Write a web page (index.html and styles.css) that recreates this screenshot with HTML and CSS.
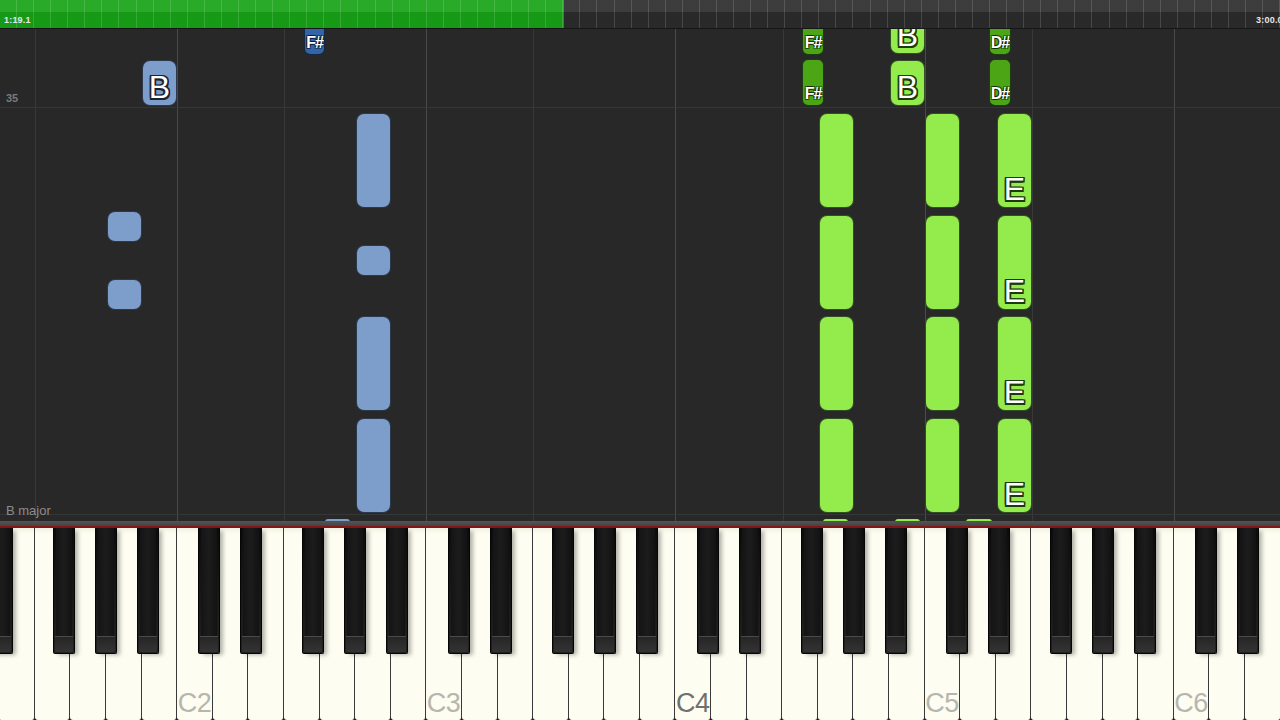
FILE: index.html
```html
<!DOCTYPE html>
<html>
<head>
<meta charset="utf-8">
<link rel="stylesheet" href="styles.css">
</head>
<body>
<div class="app">
  <div class="topbar">
    <span class="time">1:19.1</span>
    <span class="time end">3:00.05</span>
  </div>

  <div class="roll">
    <span class="measure-num">35</span>
    <span class="key-name">B major</span>

    <!-- left hand (blue) -->
    <div class="note lb" style="left:142px;top:31px;width:35px;height:46px"><span class="lbl big blue-o">B</span></div>
    <div class="note db sharp" style="left:304px;top:-12px;width:21px;height:38px"><span class="lbl small blue-o">F#</span></div>
    <div class="note lb" style="left:356px;top:84px;width:35px;height:95px"></div>
    <div class="note lb" style="left:356px;top:216px;width:35px;height:31px"></div>
    <div class="note lb" style="left:356px;top:287px;width:35px;height:95px"></div>
    <div class="note lb" style="left:356px;top:389px;width:35px;height:95px"></div>
    <div class="note lb" style="left:107px;top:182px;width:35px;height:31px"></div>
    <div class="note lb" style="left:107px;top:250px;width:35px;height:31px"></div>
    <div class="sliver lb" style="left:325px;width:25px"></div>

    <!-- right hand (green) -->
    <div class="note dg sharp" style="left:802px;top:-12px;width:22px;height:38px"><span class="lbl small green-o">F#</span></div>
    <div class="note dg sharp" style="left:802px;top:30px;width:22px;height:47px"><span class="lbl small green-o">F#</span></div>
    <div class="note lg" style="left:890px;top:-20px;width:35px;height:45px"><span class="lbl big green-o">B</span></div>
    <div class="note lg" style="left:890px;top:31px;width:35px;height:46px"><span class="lbl big green-o">B</span></div>
    <div class="note dg sharp" style="left:989px;top:-12px;width:22px;height:38px"><span class="lbl small green-o">D#</span></div>
    <div class="note dg sharp" style="left:989px;top:30px;width:22px;height:47px"><span class="lbl small green-o">D#</span></div>

    <div class="note lg" style="left:819px;top:84px;width:35px;height:95px"></div>
    <div class="note lg" style="left:819px;top:186px;width:35px;height:95px"></div>
    <div class="note lg" style="left:819px;top:287px;width:35px;height:95px"></div>
    <div class="note lg" style="left:819px;top:389px;width:35px;height:95px"></div>

    <div class="note lg" style="left:925px;top:84px;width:35px;height:95px"></div>
    <div class="note lg" style="left:925px;top:186px;width:35px;height:95px"></div>
    <div class="note lg" style="left:925px;top:287px;width:35px;height:95px"></div>
    <div class="note lg" style="left:925px;top:389px;width:35px;height:95px"></div>

    <div class="note lg" style="left:997px;top:84px;width:35px;height:95px"><span class="lbl big green-o">E</span></div>
    <div class="note lg" style="left:997px;top:186px;width:35px;height:95px"><span class="lbl big green-o">E</span></div>
    <div class="note lg" style="left:997px;top:287px;width:35px;height:95px"><span class="lbl big green-o">E</span></div>
    <div class="note lg" style="left:997px;top:389px;width:35px;height:95px"><span class="lbl big green-o">E</span></div>

    <div class="sliver lg" style="left:823px;width:25px"></div>
    <div class="sliver lg" style="left:895px;width:25px"></div>
    <div class="sliver lg" style="left:966px;width:26px"></div>
  </div>

  <div class="keyboard">
    <div class="kb-band"></div>
    <div class="kb-red"></div>
    <div class="keys">
      <div class="wk"></div><div class="wk"></div><div class="wk"></div><div class="wk"></div><div class="wk"></div>
      <div class="wk"><span class="cname">C2</span></div><div class="wk"></div><div class="wk"></div><div class="wk"></div><div class="wk"></div><div class="wk"></div><div class="wk"></div>
      <div class="wk"><span class="cname">C3</span></div><div class="wk"></div><div class="wk"></div><div class="wk"></div><div class="wk"></div><div class="wk"></div><div class="wk"></div>
      <div class="wk"><span class="cname mid">C4</span></div><div class="wk"></div><div class="wk"></div><div class="wk"></div><div class="wk"></div><div class="wk"></div><div class="wk"></div>
      <div class="wk"><span class="cname">C5</span></div><div class="wk"></div><div class="wk"></div><div class="wk"></div><div class="wk"></div><div class="wk"></div><div class="wk"></div>
      <div class="wk"><span class="cname">C6</span></div><div class="wk"></div><div class="wk"></div>

      <div class="bk" style="left:-8px"></div>
      <div class="bk" style="left:54px"></div>
      <div class="bk" style="left:96px"></div>
      <div class="bk" style="left:138px"></div>

      <div class="bk" style="left:199.2px"></div>
      <div class="bk" style="left:241.2px"></div>
      <div class="bk" style="left:303.2px"></div>
      <div class="bk" style="left:345.2px"></div>
      <div class="bk" style="left:387.2px"></div>

      <div class="bk" style="left:448.4px"></div>
      <div class="bk" style="left:490.4px"></div>
      <div class="bk" style="left:552.4px"></div>
      <div class="bk" style="left:594.4px"></div>
      <div class="bk" style="left:636.4px"></div>

      <div class="bk" style="left:697.6px"></div>
      <div class="bk" style="left:739.6px"></div>
      <div class="bk" style="left:801.6px"></div>
      <div class="bk" style="left:843.6px"></div>
      <div class="bk" style="left:885.6px"></div>

      <div class="bk" style="left:946.8px"></div>
      <div class="bk" style="left:988.8px"></div>
      <div class="bk" style="left:1050.8px"></div>
      <div class="bk" style="left:1092.8px"></div>
      <div class="bk" style="left:1134.8px"></div>

      <div class="bk" style="left:1196px"></div>
      <div class="bk" style="left:1238px"></div>
    </div>
  </div>
</div>
</body>
</html>
```

FILE: styles.css
```css
* { box-sizing: border-box; }

html, body {
  margin: 0;
  padding: 0;
  width: 1280px;
  height: 720px;
  overflow: hidden;
  background: #282828;
  font-family: "Liberation Sans", Arial, sans-serif;
}

.app {
  width: 1280px;
  height: 720px;
  display: flex;
  flex-direction: column;
}

/* ---------- progress bar ---------- */
.topbar {
  flex: none;
  height: 29px;
  display: flex;
  justify-content: space-between;
  align-items: flex-end;
  padding: 0 0 3px 4px;
  border-bottom: 1px solid #161616;
  background:
    repeating-linear-gradient(to right, transparent 0 16.07px, rgba(255,255,255,0.14) 16.07px 17.07px),
    linear-gradient(to bottom, rgba(255,255,255,0.08) 0 12px, rgba(0,0,0,0.06) 12px 100%),
    linear-gradient(to right, #17a417 0 564px, #2c2c2c 564px 100%);
}

.time {
  font-size: 9px;
  font-weight: bold;
  color: #e6e6e6;
  line-height: 10px;
  letter-spacing: 0.2px;
  white-space: nowrap;
}

.time.end {
  margin-right: -8px;
}

/* ---------- note roll ---------- */
.roll {
  flex: none;
  position: relative;
  height: 492px;
  overflow: hidden;
  background-color: #282828;
  background-image:
    linear-gradient(to bottom, transparent 78px, #363636 78px 79px, transparent 79px),
    linear-gradient(to bottom, transparent 485px, #363636 485px 486px, transparent 486px),
    repeating-linear-gradient(to right, #4a4a4a 0 1px, transparent 1px 249.2px),
    repeating-linear-gradient(to right, #383838 0 1px, transparent 1px 249.2px);
  background-position: 0 0, 0 0, 177px 0, 35px 0;
  background-size: 100% 100%, 100% 100%, 1280px 100%, 1280px 100%;
  background-repeat: no-repeat;
}

.measure-num {
  position: absolute;
  left: 6px;
  top: 63px;
  font-size: 11px;
  font-weight: bold;
  color: #7a7a7a;
}

.key-name {
  position: absolute;
  left: 6px;
  top: 474px;
  font-size: 13px;
  color: #8c8c8c;
}

.note {
  position: absolute;
  border-radius: 8px;
  border: 1px solid rgba(10, 14, 20, 0.7);
  display: flex;
  flex-direction: column;
  justify-content: flex-end;
  align-items: center;
  overflow: hidden;
}

.note.sharp {
  border-radius: 6px;
}

.lb { background: #7d9dca; }
.db { background: #3363a8; }
.lg { background: #94eb4c; }
.dg { background: #4ca515; }

.lbl {
  color: #ffffff;
  line-height: 1;
  text-align: center;
  white-space: nowrap;
}

.lbl.big {
  font-size: 32px;
  padding-bottom: 2px;
}

.lbl.small {
  font-size: 16px;
  font-weight: bold;
  padding-bottom: 3px;
  letter-spacing: -1px;
}

.blue-o {
  text-shadow:
    -1.5px -1.5px 0 #1b2333, 1.5px -1.5px 0 #1b2333,
    -1.5px 1.5px 0 #1b2333, 1.5px 1.5px 0 #1b2333,
    0 -1.5px 0 #1b2333, 0 1.5px 0 #1b2333,
    -1.5px 0 0 #1b2333, 1.5px 0 0 #1b2333;
}

.green-o {
  text-shadow:
    -1.5px -1.5px 0 #1d3a0d, 1.5px -1.5px 0 #1d3a0d,
    -1.5px 1.5px 0 #1d3a0d, 1.5px 1.5px 0 #1d3a0d,
    0 -1.5px 0 #1d3a0d, 0 1.5px 0 #1d3a0d,
    -1.5px 0 0 #1d3a0d, 1.5px 0 0 #1d3a0d;
}

.lbl.small.blue-o, .lbl.small.green-o {
  text-shadow:
    -1px -1px 0 rgba(0,0,0,0.5), 1px -1px 0 rgba(0,0,0,0.5),
    -1px 1px 0 rgba(0,0,0,0.5), 1px 1px 0 rgba(0,0,0,0.5);
}

.sliver {
  position: absolute;
  top: 490px;
  height: 3px;
  border-radius: 3px 3px 0 0;
}

/* ---------- keyboard ---------- */
.keyboard {
  flex: none;
  height: 199px;
  display: flex;
  flex-direction: column;
  background: #1a1a1a;
}

.kb-band {
  flex: none;
  height: 5px;
  background: linear-gradient(to bottom, #545454, #444444);
}

.kb-red {
  flex: none;
  height: 2px;
  background: #861616;
}

.keys {
  flex: 1;
  position: relative;
  display: flex;
  margin-left: -0.8px;
}

.wk {
  flex: none;
  width: 35.6px;
  height: 100%;
  background: linear-gradient(to bottom, #f1f1e4 0, #fdfdf1 6px, #fdfdf1 100%);
  border-right: 1px solid #3a3a3a;
  border-radius: 0 0 3px 3px;
  display: flex;
  justify-content: center;
  align-items: flex-end;
  padding-bottom: 3px;
}

.cname {
  font-size: 27px;
  line-height: 27px;
  color: #b6b6ae;
  letter-spacing: -0.5px;
}

.cname.mid {
  color: #707070;
}

.bk {
  position: absolute;
  top: 0;
  width: 22px;
  height: 126px;
  background: linear-gradient(to bottom, #0c0c0c 0, #151515 40%, #1e1e1e 85%, #222 100%);
  border: 1px solid #050505;
  border-top: none;
  border-radius: 0 0 2px 2px;
  box-shadow: 4px 2px 4px -1px rgba(0,0,0,0.3);
}

.bk::before {
  content: "";
  position: absolute;
  left: 2px;
  right: 2px;
  top: 0;
  bottom: 17px;
  background: linear-gradient(to right, #141414, #1c1c1c 50%, #121212);
}

.bk::after {
  content: "";
  position: absolute;
  left: 1px;
  right: 1px;
  bottom: 1px;
  height: 16px;
  background: linear-gradient(to bottom, #4a4a4a 0 1px, #262626 1px, #333 100%);
  border-radius: 0 0 2px 2px;
}
```
